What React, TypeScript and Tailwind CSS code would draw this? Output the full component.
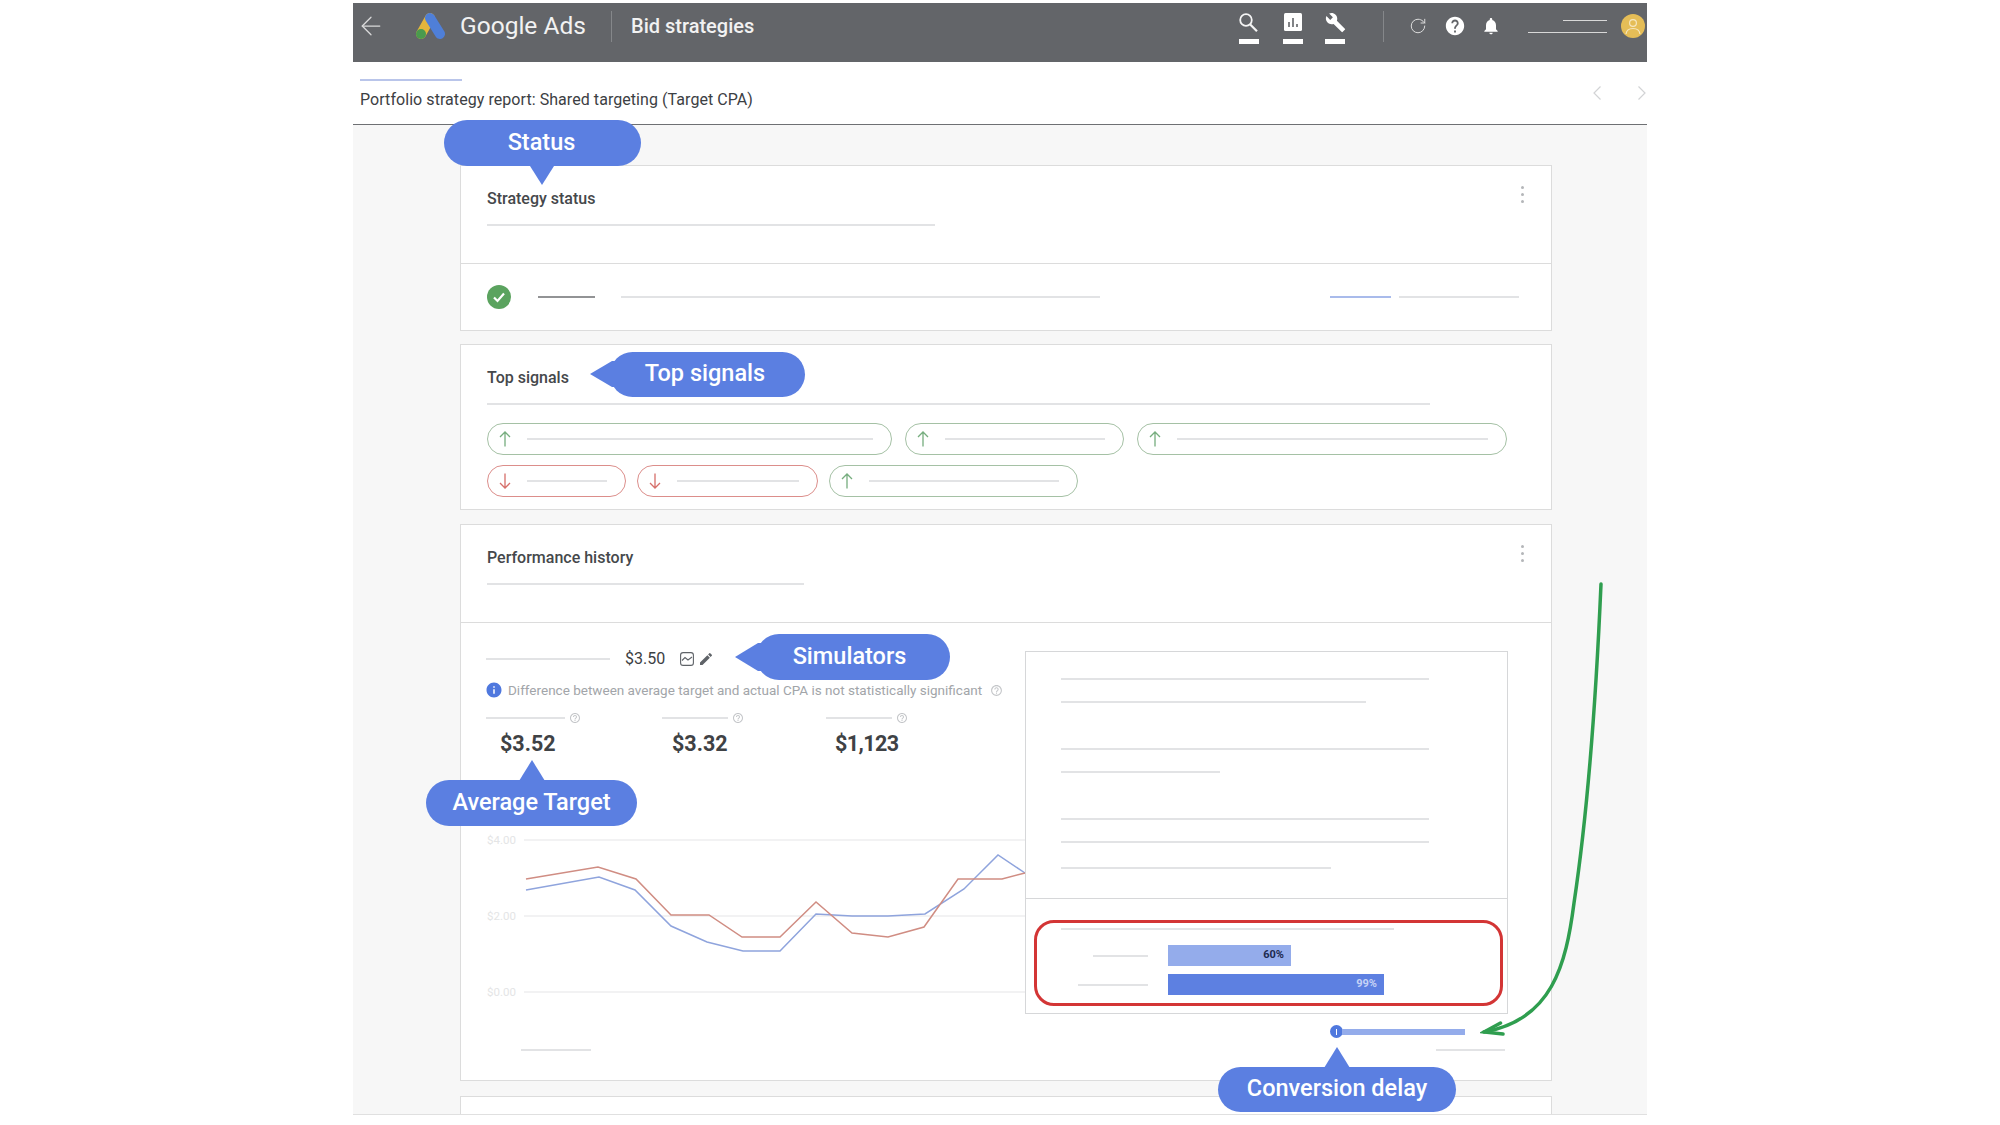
import type { ReactNode } from 'react'
import { MdBuild, MdEdit, MdHelp, MdHelpOutline, MdInfo, MdNotifications } from 'react-icons/md'
import { ArrowLeft, RotateCw } from 'lucide-react'

// Placeholder line used instead of blurred-out text
function Rule({ className = '', tone = 'bg-[#e2e3e5]' }: { className?: string; tone?: string }) {
  return <div className={`h-0.5 shrink-0 ${tone} ${className}`} />
}

function Dots() {
  return (
    <div className="mt-[20px] flex flex-col gap-[4px]">
      <span className="size-[3px] rounded-full bg-[#b4b6b9]" />
      <span className="size-[3px] rounded-full bg-[#b4b6b9]" />
      <span className="size-[3px] rounded-full bg-[#b4b6b9]" />
    </div>
  )
}

function Bubble({ label, className, tail }: { label: string; className: string; tail: ReactNode }) {
  return (
    <div className={`absolute z-10 flex items-center justify-center rounded-[23px] bg-[#5b7fe1] pb-[1px] text-[23.5px] font-medium text-white ${className}`}>
      {tail}
      {label}
    </div>
  )
}

function Pill({ up, className }: { up: boolean; className: string }) {
  return (
    <div className={`flex h-8 items-center rounded-full border pl-[11px] pr-[18px] ${up ? 'border-[#a5c1a5]' : 'border-[#dc8e8b]'} ${className}`}>
      <svg viewBox="0 0 12 16" fill="none" strokeWidth="1.3" className={`h-4 w-3 shrink-0 ${up ? 'stroke-[#76ad7e]' : 'stroke-[#d66f6a]'}`}>
        {up ? <path d="M6 15.500V1M1 6l5-5 5 5" /> : <path d="M6 .5V15M1 10l5 5 5-5" />}
      </svg>
      <Rule className="ml-[16px] flex-1" />
    </div>
  )
}

function ToolSlot({ children, className = '' }: { children: ReactNode; className?: string }) {
  return (
    <div className={`flex h-full w-5 flex-col items-center pt-[9px] ${className}`}>
      <div className="flex h-5 items-center justify-center">{children}</div>
      <div className="mt-[7px] h-[5px] w-5 bg-white" />
    </div>
  )
}

function Metric({ ruleClass, colClass, valueClass, value }: { ruleClass: string; colClass: string; valueClass: string; value: string }) {
  return (
    <div className={colClass}>
      <div className="flex h-3 items-center">
        <Rule className={ruleClass} />
        <MdHelpOutline size={12} className="ml-[4px] text-[#c4c6c9]" />
      </div>
      <div className={`mt-[6px] text-[21.5px] font-bold leading-[28px] text-[#3f4245] ${valueClass}`}>{value}</div>
    </div>
  )
}

const redLine = '40,49 112,37 150,49 185,85 223,85 256,107 294,107 330,72 366,103 402,107 438,97 472,49 516,49 539,43'
const blueLine = '40,60 113,47 149,60 185,96 221,112 257,121 294,121 330,84 366,86 402,86 439,84 478,59 512,25 539,43'

export default function App() {
  return (
    <div className="h-[1125px] overflow-hidden bg-white pl-[353px] pt-[3px] font-[Roboto,sans-serif]">
      <div className="w-[1294px]">
        {/* Barra superior */}
        <header className="flex h-[59px] items-start bg-[#636569] text-white">
          <div className="flex h-[46px] items-center">
            <ArrowLeft size={30} strokeWidth={1} className="ml-[3px] text-[#dadada]" />
            <svg viewBox="0 0 30 26" className="ml-[29px] h-[26px] w-[30px]">
              <path d="M15 5 6 21" stroke="#e3b53c" strokeWidth="10" strokeLinecap="round" />
              <path d="M15 5 25 21" stroke="#4f7fd8" strokeWidth="10" strokeLinecap="round" />
              <circle cx="6" cy="21" r="5" fill="#4a9a4e" />
            </svg>
            <span className="ml-[15px] w-[151px] text-[24.500px] text-[#f2f2f2]">Google Ads</span>
            <div className="h-[31px] w-px bg-[#85878a]" />
            <span className="ml-[19px] text-[20px] font-medium text-[#f2f2f2]">Bid strategies</span>
          </div>
          <div className="ml-auto flex h-[46px] items-center">
            <div className="flex h-full">
              <ToolSlot>
                <svg viewBox="0 0 19 19" fill="none" stroke="#f4f4f4" strokeWidth="1.800" className="size-[19px] -translate-x-[1px]">
                  <circle cx="7" cy="7" r="5.800" />
                  <path d="m11 11.200 7 7" strokeWidth="2.200" />
                </svg>
              </ToolSlot>
              <ToolSlot className="ml-[24px]">
                <svg viewBox="0 0 18 18" className="size-[18px]">
                  <rect width="18" height="18" rx="1.500" fill="#fff" />
                  <path d="M5 14V9M9 14V5M13 14v-3" stroke="#636569" strokeWidth="1.600" />
                </svg>
              </ToolSlot>
              <ToolSlot className="ml-[22px]"><MdBuild size={21} /></ToolSlot>
            </div>
            <div className="ml-[38px] h-[31px] w-px bg-[#85878a]" />
            <RotateCw size={18} strokeWidth={1.3} className="ml-[25px] text-[#dedede]" />
            <MdHelp size={22} className="ml-[17px]" />
            <MdNotifications size={20} className="ml-[15px]" />
            <div className="ml-[27px] flex w-[79px] flex-col items-end gap-[11px]">
              <div className="h-px w-[44px] bg-[#d8d8d8]" />
              <div className="h-px w-[79px] bg-[#d8d8d8]" />
            </div>
            <svg viewBox="0 0 24 24" className="ml-[14px] mr-[2px] size-6">
              <circle cx="12" cy="12" r="12" fill="#e5bd57" />
              <circle cx="12" cy="9" r="3.400" fill="none" stroke="#f6e7c0" strokeWidth="1.200" />
              <path d="M5 20c.5-4 3.500-5.500 7-5.500s6.500 1.500 7 5.500" fill="none" stroke="#f6e7c0" strokeWidth="1.200" />
            </svg>
          </div>
        </header>

        {/* Título del informe */}
        <div className="flex h-[63px] justify-between border-b border-[#6e7073] bg-white">
          <div className="pl-[7px] pt-[17px]">
            <div className="h-0.5 w-[102px] bg-[#b9c5ea]" />
            <h1 className="mt-[8px] text-[16px] leading-[22px] tracking-[0.06px] text-[#3c4043]">Portfolio strategy report: Shared targeting (Target CPA)</h1>
          </div>
          <div className="flex gap-[37px] pr-px pt-[24px]">
            <svg viewBox="0 0 8 14" fill="none" stroke="#d2d3d5" strokeWidth="1.200" className="h-[14px] w-2"><path d="M7.500 .5 1 7l6.500 6.500" /></svg>
            <svg viewBox="0 0 8 14" fill="none" stroke="#d2d3d5" strokeWidth="1.200" className="h-[14px] w-2"><path d="M.5 .5 7 7l-6.500 6.500" /></svg>
          </div>
        </div>

        <main className="relative flex h-[990px] flex-col overflow-visible border-b border-[#e0e0e0] bg-[#f7f7f7] pl-[107px] pr-[95px] pt-[40px]">
          {/* Estado */}
          <section className="relative h-[166px] border border-[#dcdcdc] bg-white">
            <Bubble
              label="Status"
              className="-left-[17px] -top-[46px] h-[46px] w-[197px] pr-[2px]"
              tail={<svg viewBox="0 0 24 19" className="absolute left-[86px] top-[46px] h-[19px] w-6 fill-[#5b7fe1]"><path d="M0 0h24L12 19z" /></svg>}
            />
            <div className="flex h-[98px] justify-between border-b border-[#dcdcdc] pl-[26px] pr-[27px]">
              <div className="pt-[23px]">
                <h2 className="text-[16px] font-medium leading-[20px] text-[#45484b]">Strategy status</h2>
                <Rule className="mt-[15px] w-[448px]" />
              </div>
              <Dots />
            </div>
            <div className="flex h-[66px] items-center pl-[26px] pr-[32px]">
              <div className="flex size-6 items-center justify-center rounded-full bg-[#5ba35f]">
                <svg viewBox="0 0 14 14" fill="none" stroke="#fff" strokeWidth="2.200" className="size-[14px]"><path d="m2 7.500 3.500 3.500L12 3.500" /></svg>
              </div>
              <Rule className="ml-[27px] w-[57px]" tone="bg-[#929395]" />
              <Rule className="ml-[26px] w-[479px]" />
              <Rule className="ml-auto w-[61px]" tone="bg-[#a9bbeb]" />
              <Rule className="ml-[8px] w-[120px]" />
            </div>
          </section>

          {/* Señales */}
          <section className="relative mt-[13px] h-[166px] border border-[#dcdcdc] bg-white pl-[26px] pt-[23px]">
            <Bubble
              label="Top signals"
              className="left-[149px] top-[7px] h-[45px] w-[195px] pr-[5px]"
              tail={<svg viewBox="0 0 30 26" className="absolute -left-[20px] top-[9px] h-[26px] w-[30px] fill-[#5b7fe1]"><path d="M0 13 22 0h8v26h-8z" /></svg>}
            />
            <h2 className="text-[16px] font-medium leading-[20px] text-[#45484b]">Top signals</h2>
            <Rule className="mt-[15px] w-[943px]" />
            <div className="mt-[18px] flex gap-[13px]">
              <Pill up className="w-[405px]" />
              <Pill up className="w-[219px]" />
              <Pill up className="w-[370px]" />
            </div>
            <div className="mt-[10px] flex gap-[11px]">
              <Pill up={false} className="w-[139px]" />
              <Pill up={false} className="w-[181px]" />
              <Pill up className="w-[249px]" />
            </div>
          </section>

          {/* Historial */}
          <section className="relative mt-[14px] h-[557px] shrink-0 border border-[#dcdcdc] bg-white">
            <Bubble
              label="Simulators"
              className="left-[295px] top-[109px] h-[46px] w-[194px] pr-[7px]"
              tail={<svg viewBox="0 0 31 28" className="absolute -left-[21px] top-[9px] h-7 w-[31px] fill-[#5b7fe1]"><path d="M0 14 23 0h8v28h-8z" /></svg>}
            />
            <Bubble
              label="Average Target"
              className="-left-[35px] top-[255px] h-[46px] w-[211px]"
              tail={<svg viewBox="0 0 26 21" className="absolute left-[93px] -top-[20px] h-[21px] w-[26px] fill-[#5b7fe1]"><path d="M13 0 26 21H0z" /></svg>}
            />
            <Bubble
              label="Conversion delay"
              className="left-[757px] top-[542px] h-[45px] w-[238px]"
              tail={<svg viewBox="0 0 26 21" className="absolute left-[106px] -top-[20px] h-[21px] w-[26px] fill-[#5b7fe1]"><path d="M13 0 26 21H0z" /></svg>}
            />

            <div className="flex h-[98px] justify-between border-b border-[#dcdcdc] pl-[26px] pr-[27px]">
              <div className="pt-[23px]">
                <h2 className="text-[16px] font-medium leading-[20px] text-[#45484b]">Performance history</h2>
                <Rule className="mt-[15px] w-[317px]" />
              </div>
              <Dots />
            </div>

            <div className="flex">
              {/* Columna izquierda */}
              <div className="w-[564px] shrink-0 pl-[25px] pt-[26px]">
                <div className="flex h-5 items-center">
                  <Rule className="w-[124px]" />
                  <span className="ml-[15px] text-[16px] text-[#3c4043]">$3.50</span>
                  <svg viewBox="0 0 14 14" fill="none" stroke="#5f6368" strokeWidth="1.100" className="ml-[15px] size-[14px]">
                    <rect x=".6" y=".6" width="12.800" height="12.800" rx="2.500" />
                    <path d="M2 8.500 5 5.500l3 2.500 4-3" />
                  </svg>
                  <MdEdit size={16} className="ml-[4px] text-[#5f6368]" />
                </div>
                <div className="mt-[13px] flex h-4 items-center">
                  <MdInfo size={18} className="-ml-[1px] text-[#4f78de]" />
                  <span className="ml-[5px] text-[13.500px] text-[#a2a5a9]">Difference between average target and actual CPA is not statistically significant</span>
                  <MdHelpOutline size={13} className="ml-[8px] text-[#c4c6c9]" />
                </div>
                <div className="mt-[14px] flex">
                  <Metric colClass="w-[176px]" ruleClass="w-[79px]" valueClass="pl-[14px]" value="$3.52" />
                  <Metric colClass="w-[164px]" ruleClass="w-[66px]" valueClass="pl-[10px]" value="$3.32" />
                  <Metric colClass="w-[100px]" ruleClass="w-[66px]" valueClass="pl-[9px] tracking-[-0.6px]" value="$1,123" />
                </div>
                <svg viewBox="0 0 539 170" fill="none" className="mt-[72px] block h-[170px] w-[539px] overflow-visible">
                  <g stroke="#eeeeef" strokeWidth="1.500">
                    <path d="M38 10H539M38 86H539M38 162H539" />
                  </g>
                  <g fill="#e4e5e6" fontSize="11.500">
                    <text x="1" y="14">$4.00</text>
                    <text x="1" y="90">$2.00</text>
                    <text x="1" y="166">$0.00</text>
                  </g>
                  <polyline points={blueLine} stroke="#8fa4dd" strokeWidth="1.500" />
                  <polyline points={redLine} stroke="#d08d83" strokeWidth="1.500" />
                </svg>
                <Rule className="ml-[35px] mt-[49px] w-[70px]" />
              </div>

              {/* Panel derecho */}
              <div className="w-[483px] shrink-0 pt-[28px]">
                <div className="border border-[#d6d7d9]">
                  <div className="h-[247px] border-b border-[#d6d7d9] pl-[35px] pt-[26px]">
                    <Rule className="w-[368px]" />
                    <Rule className="mt-[21px] w-[305px]" />
                    <Rule className="mt-[45px] w-[368px]" />
                    <Rule className="mt-[21px] w-[159px]" />
                    <Rule className="mt-[45px] w-[368px]" />
                    <Rule className="mt-[21px] w-[368px]" />
                    <Rule className="mt-[24px] w-[270px]" />
                  </div>
                  <div className="h-[114px] pl-[8px] pt-[21px]">
                    <div className="h-[86px] w-[469px] rounded-[20px] border-[3px] border-[#d33535] pl-[24px] pt-[5px]">
                      <Rule className="w-[333px]" />
                      <div className="mt-[15px] flex items-center">
                        <div className="flex w-[87px] justify-end"><Rule className="w-[55px]" /></div>
                        <div className="ml-[20px] flex h-[21px] w-[123px] items-center justify-end bg-[#94aceb] pr-[7px] text-[11px] font-bold text-[#1d2a50]">60%</div>
                      </div>
                      <div className="mt-[8px] flex items-center">
                        <div className="flex w-[87px] justify-end"><Rule className="w-[70px]" /></div>
                        <div className="ml-[20px] flex h-[21px] w-[216px] items-center justify-end bg-[#5d80e1] pr-[7px] text-[11px] font-bold text-[#c6d3f6]">99%</div>
                      </div>
                    </div>
                  </div>
                </div>
                <div className="mt-[11px] flex items-center pl-[305px]">
                  <div className="flex size-[13px] items-center justify-center rounded-full bg-[#4f78de]">
                    <span className="h-[6px] w-px bg-white" />
                  </div>
                  <div className="-ml-px h-1.5 w-[123px] bg-[#94aceb]" />
                </div>
                <Rule className="ml-[411px] mt-[11px] w-[69px]" />
              </div>
            </div>
          </section>

          <section className="mt-[15px] flex-1 border border-b-0 border-[#dcdcdc] bg-white" />

          {/* Flecha verde */}
          <svg viewBox="0 0 130 460" fill="none" stroke="#2f9e4f" strokeWidth="3.500" strokeLinecap="round" className="absolute left-[1127px] top-[455px] z-10 h-[460px] w-[130px]">
            <path d="M121 4C116 120 108 230 94 323 86 385 72 440 4 452" />
            <path d="M20.500 443 4 452l19 2" />
          </svg>
        </main>
      </div>
    </div>
  )
}
